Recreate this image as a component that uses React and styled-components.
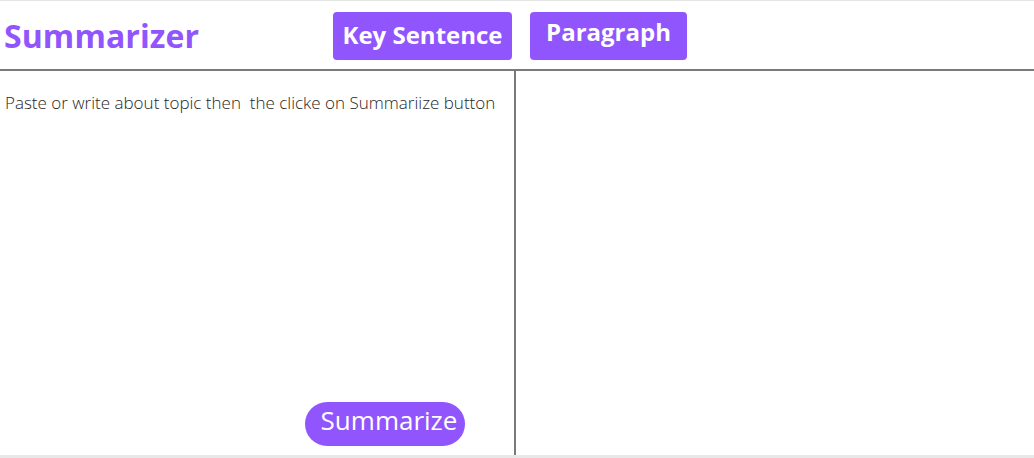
import React, { useState } from 'react';
import styled, { createGlobalStyle } from 'styled-components';

const GlobalStyle = createGlobalStyle`
  html, body {
    margin: 0;
    padding: 0;
    background: #ffffff;
    font-family: "Open Sans", "Liberation Sans", sans-serif;
  }
`;

const purple = '#9155fd';

const Page = styled.div`
  width: 1034px;
  height: 458px;
  display: flex;
  flex-direction: column;
  border-top: 1px solid #e6e6e6;
  box-sizing: border-box;
  overflow: hidden;
`;

const Header = styled.header`
  height: 68px;
  display: grid;
  grid-template-columns: 311px auto auto 1fr;
  align-items: center;
  column-gap: 18px;
  padding-left: 4px;
  border-bottom: 2px solid #7a7a7a;
`;

const Title = styled.h1`
  margin: 0;
  font-size: 32px;
  font-weight: 700;
  color: ${purple};
  letter-spacing: 0.1px;
`;

const ModeButton = styled.button`
  height: 48px;
  width: ${(p) => p.$w}px;
  margin-top: 2px;
  padding: ${(p) => (p.$raised ? '0 0 10px' : '0 0 3px')};
  border: none;
  border-radius: 4px;
  background: ${purple};
  color: #ffffff;
  font-family: inherit;
  font-size: 24px;
  font-weight: 700;
  cursor: pointer;
`;

const Main = styled.main`
  flex: 1;
  display: grid;
  grid-template-columns: 516px 1fr;
`;

const InputPane = styled.section`
  display: flex;
  flex-direction: column;
  border-right: 2px solid #7a7a7a;
  padding: 20px 0 9px 5px;
`;

const Prompt = styled.p`
  flex: 1;
  margin: 0;
  font-size: 17px;
  font-weight: 300;
  color: #262626;
  white-space: pre;
`;

const SummarizeButton = styled.button`
  align-self: flex-start;
  margin-left: 300px;
  width: 160px;
  height: 44px;
  border: none;
  border-radius: 22px;
  background: ${purple};
  color: #ffffff;
  font-family: inherit;
  font-size: 26px;
  font-weight: 400;
  padding: 0 0 11px 8px;
  cursor: pointer;
`;

const OutputPane = styled.section``;

const Footer = styled.div`
  height: 3px;
  background: #e8e8e8;
`;

export default function App() {
  const [mode, setMode] = useState('key');

  return (
    <>
      <GlobalStyle />
      <Page>
        <Header>
          <Title>Summarizer</Title>
          <ModeButton $w={179} onClick={() => setMode('key')}>
            Key Sentence
          </ModeButton>
          <ModeButton $w={157} $raised onClick={() => setMode('para')}>
            Paragraph
          </ModeButton>
        </Header>
        <Main>
          <InputPane>
            <Prompt>Paste or write about topic then  the clicke on Summariize button</Prompt>
            <SummarizeButton>Summarize</SummarizeButton>
          </InputPane>
          <OutputPane data-mode={mode} />
        </Main>
        <Footer />
      </Page>
    </>
  );
}
